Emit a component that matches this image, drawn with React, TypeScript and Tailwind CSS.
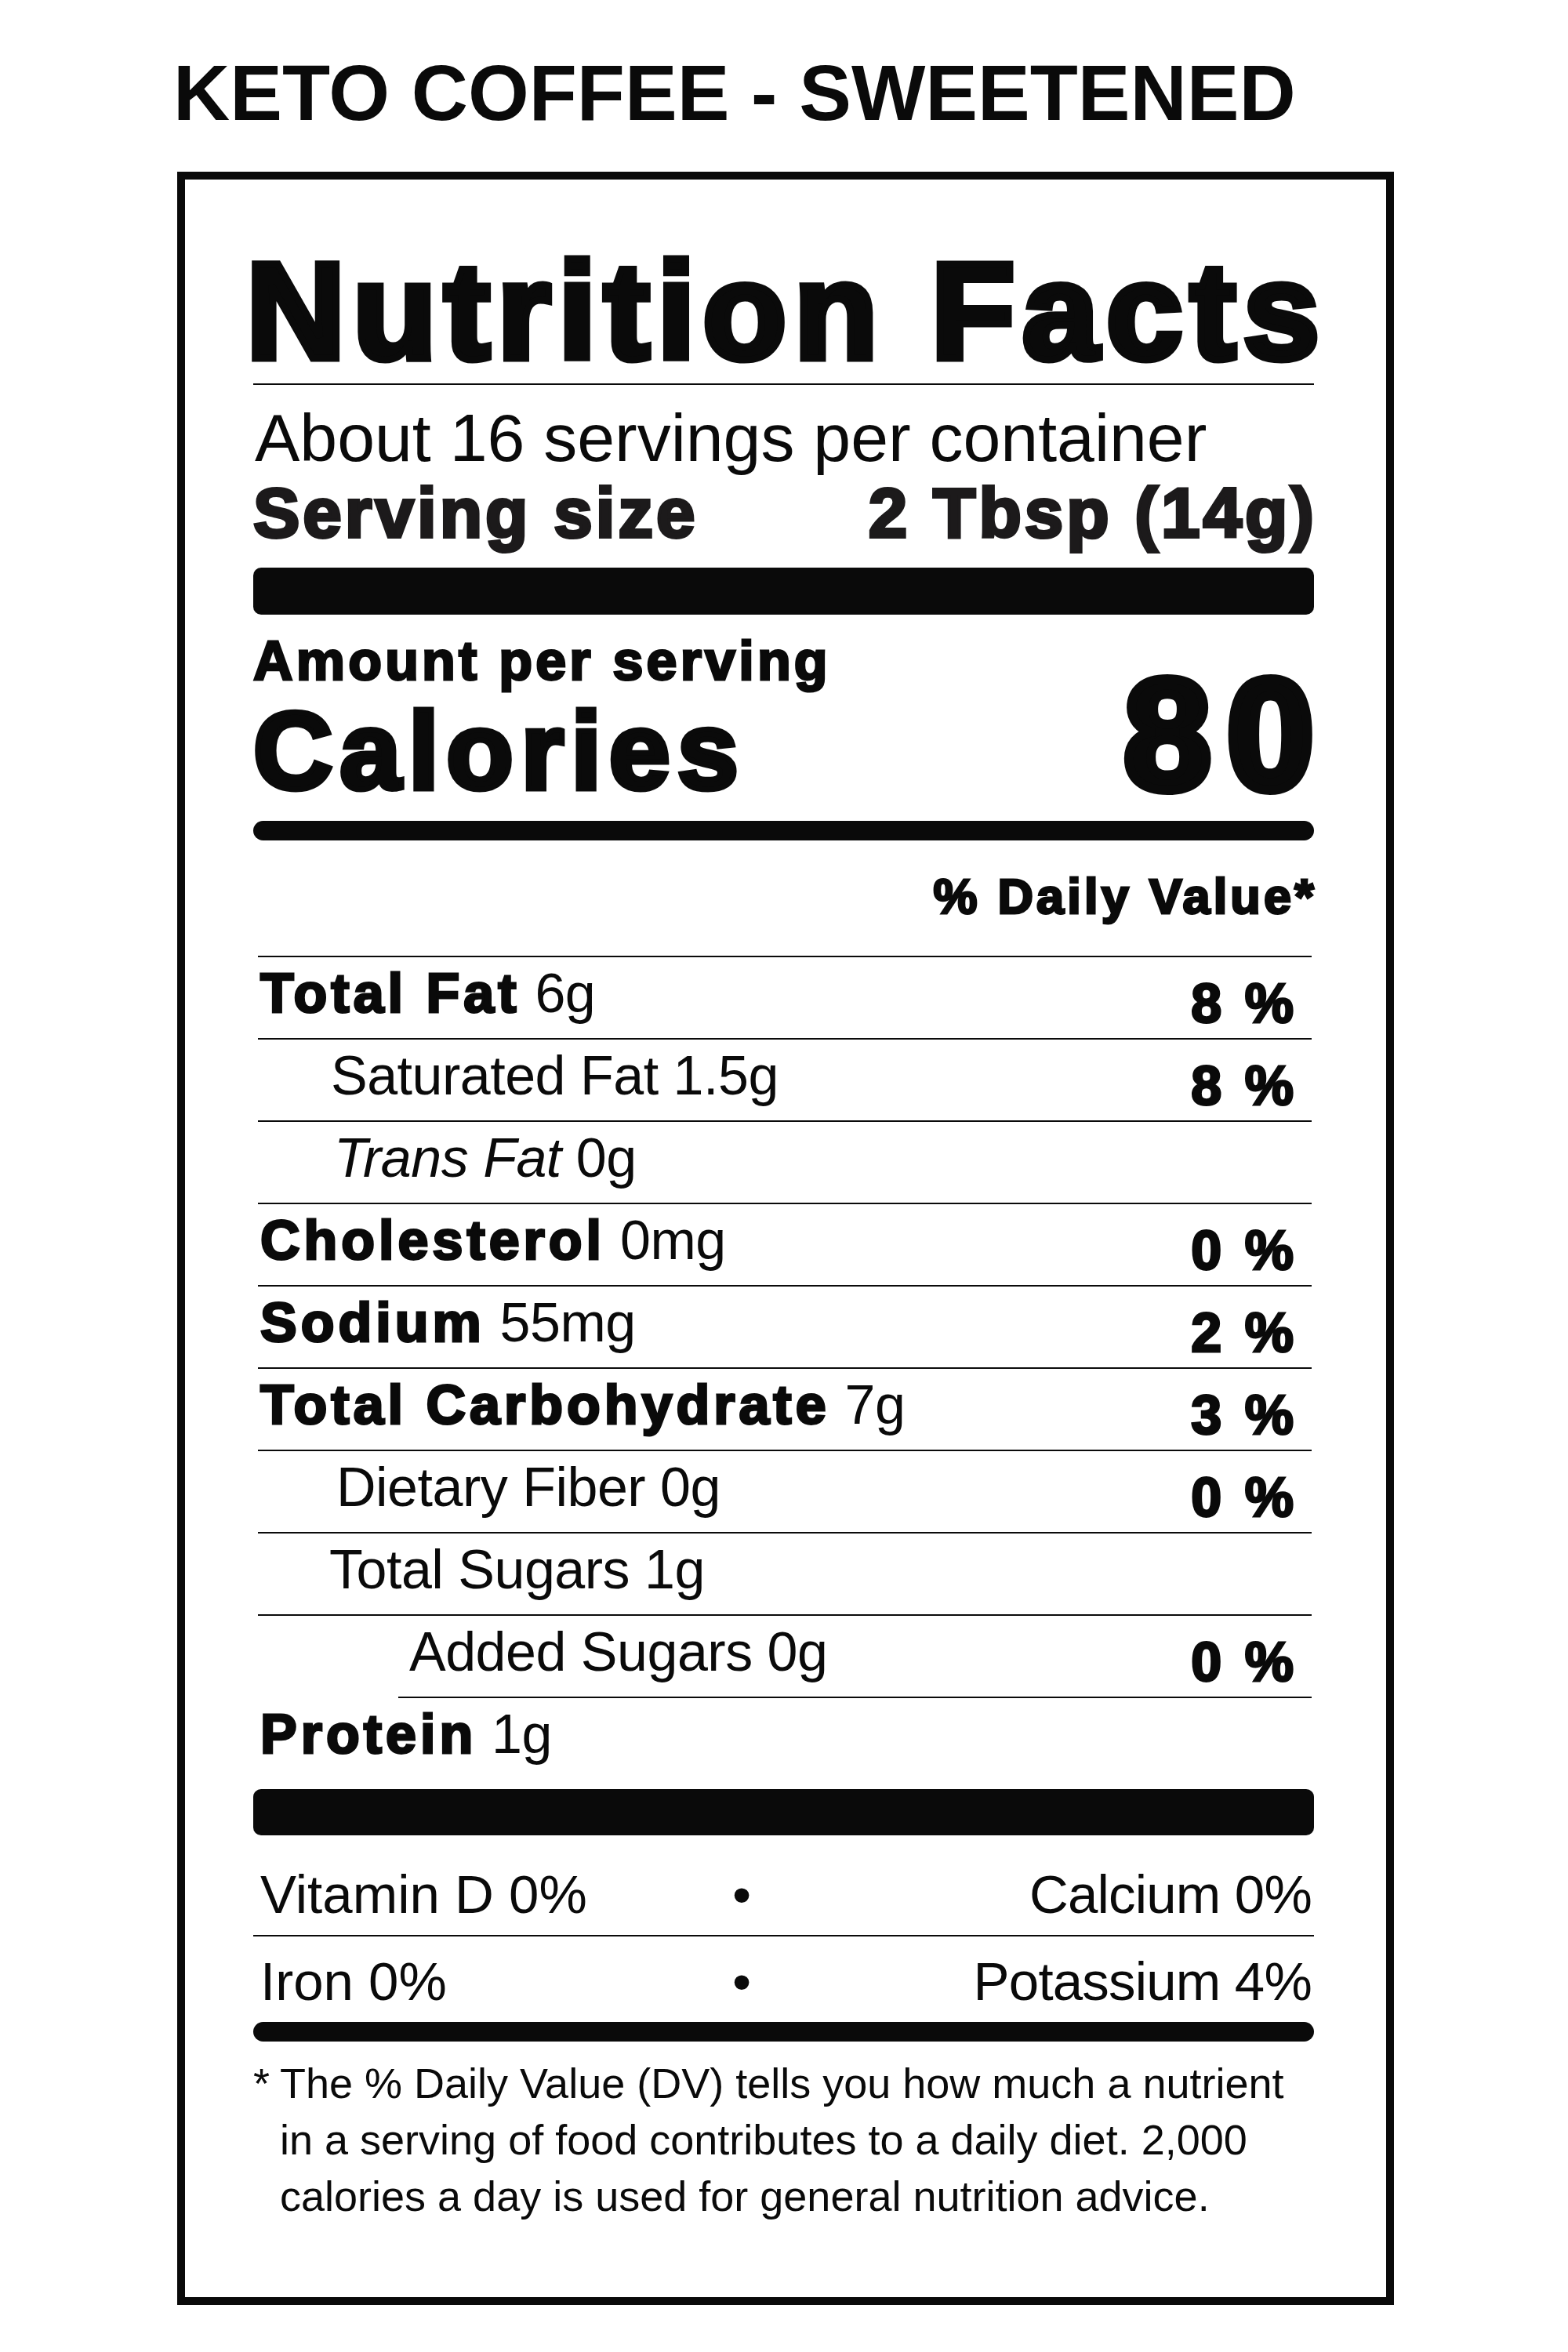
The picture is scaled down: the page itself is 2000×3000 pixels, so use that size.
const heavy = "font-bold [-webkit-text-stroke:3px_#0a0a0a]";

type Row = {
  name: string;
  amount: string;
  dv?: string;
  bold?: boolean;
  italic?: boolean;
  indent?: string;
  lineIndent?: string;
  height?: string;
};

const rows: Row[] = [
  { name: "Total Fat", amount: "6g", dv: "8", bold: true },
  { name: "Saturated Fat", amount: "1.5g", dv: "8", indent: "pl-[93px]" },
  { name: "Trans Fat", amount: "0g", italic: true, indent: "pl-[97px]" },
  { name: "Cholesterol", amount: "0mg", dv: "0", bold: true },
  { name: "Sodium", amount: "55mg", dv: "2", bold: true },
  { name: "Total Carbohydrate", amount: "7g", dv: "3", bold: true },
  { name: "Dietary Fiber", amount: "0g", dv: "0", indent: "pl-[100px]" },
  { name: "Total Sugars", amount: "1g", indent: "pl-[91px]" },
  { name: "Added Sugars", amount: "0g", dv: "0", indent: "pl-[193px]" },
  { name: "Protein", amount: "1g", bold: true, lineIndent: "ml-[179px]", height: "h-[118px]" },
];

export default function App() {
  return (
    <div className="w-[2000px] min-h-[3000px] bg-white text-[#0a0a0a] font-['Liberation_Sans',Arial,sans-serif]">
      <h1 className="pt-[68px] pl-[221px] text-[100px] leading-none font-bold whitespace-nowrap">
        KETO COFFEE - SWEETENED
      </h1>

      {/* Label box */}
      <div className="mt-[51px] ml-[226px] w-[1552px] border-[10px] border-[#0a0a0a] pl-[87px] pr-[92px] pt-[80px] pb-[93px]">
        <div className="-ml-[9px] text-[175px] leading-none font-bold tracking-[9.6px] whitespace-nowrap [-webkit-text-stroke:9px_#0a0a0a]">
          Nutrition Facts
        </div>
        <div className="mt-[5px] h-[2px] bg-[#0a0a0a]" />

        <div className="mt-[24px] ml-[2px] text-[86px] leading-none whitespace-nowrap">
          About 16 servings per container
        </div>
        <div className="mt-[9px] -mr-[4px] flex justify-between text-[89px] leading-none font-bold tracking-[4px] text-[#1c1a1b] [-webkit-text-stroke:4px_#1c1a1b]">
          <span>Serving size</span>
          <span>2 Tbsp (14g)</span>
        </div>

        <div className="mt-[25px] h-[60px] rounded-[10px] bg-[#0a0a0a]" />

        <div className="mt-[24px] text-[70px] leading-none font-bold tracking-[4.2px] [-webkit-text-stroke:3px_#0a0a0a]">
          Amount per serving
        </div>
        <div className="flex items-baseline justify-between">
          <span className="text-[140px] leading-none font-bold tracking-[9.5px] [-webkit-text-stroke:7px_#0a0a0a]">
            Calories
          </span>
          <span className="-mr-[20px] text-[200px] leading-[117px] font-bold tracking-[20px] [-webkit-text-stroke:12px_#0a0a0a]">
            80
          </span>
        </div>

        <div className="mt-[19px] h-[25px] rounded-full bg-[#0a0a0a]" />

        <div className="mt-[40px] -mr-[4px] text-right text-[63px] leading-none font-bold tracking-[4.2px] [-webkit-text-stroke:3px_#0a0a0a]">
          % Daily Value*
        </div>

        {/* Nutrient rows */}
        <div className="mt-[44px] ml-[6px] mr-[3px]">
          {rows.map((r) => (
            <div key={r.name} className={`flex flex-col ${r.height ?? "h-[105px]"}`}>
              <div className={`h-[2px] bg-[#0a0a0a] ${r.lineIndent ?? ""}`} />
              <div className="flex justify-between text-[70px] leading-none">
                <span className={`pt-[11px] pl-[3px] whitespace-nowrap ${r.indent ?? ""}`}>
                  {r.bold ? (
                    <span className={`${heavy} tracking-[5px]`}>{r.name}</span>
                  ) : r.italic ? (
                    <span className="italic tracking-[-0.5px]">{r.name}</span>
                  ) : (
                    <span className="tracking-[-0.5px]">{r.name}</span>
                  )}
                  <span className="tracking-[-0.5px]"> {r.amount}</span>
                </span>
                {r.dv && (
                  <span className={`pt-[24px] pr-[18px] tracking-[5px] whitespace-nowrap ${heavy}`}>
                    {r.dv} %
                  </span>
                )}
              </div>
            </div>
          ))}
        </div>

        <div className="h-[59px] rounded-[10px] bg-[#0a0a0a]" />

        {/* Vitamins & minerals */}
        <div className="pt-[41px] pl-[9px] pr-[3px] grid grid-cols-[596px_36px_1fr] text-[69px] leading-none">
          <span>Vitamin D 0%</span>
          <span className="text-center">•</span>
          <span className="text-right tracking-[-0.8px]">Calcium 0%</span>
        </div>
        <div className="mt-[17px] h-[2px] bg-[#0a0a0a]" />
        <div className="mt-[23px] pl-[9px] pr-[3px] grid grid-cols-[596px_36px_1fr] text-[69px] leading-none">
          <span>Iron 0%</span>
          <span className="text-center">•</span>
          <span className="text-right tracking-[-0.8px]">Potassium 4%</span>
        </div>

        <div className="mt-[17px] h-[25px] rounded-full bg-[#0a0a0a]" />

        <div className="mt-[17px] flex text-[54px] leading-[72px]">
          <span className="w-[34px] shrink-0">*</span>
          <p>
            The % Daily Value (DV) tells you how much a nutrient
            <br />
            in a serving of food contributes to a daily diet. 2,000
            <br />
            calories a day is used for general nutrition advice.
          </p>
        </div>
      </div>
    </div>
  );
}
